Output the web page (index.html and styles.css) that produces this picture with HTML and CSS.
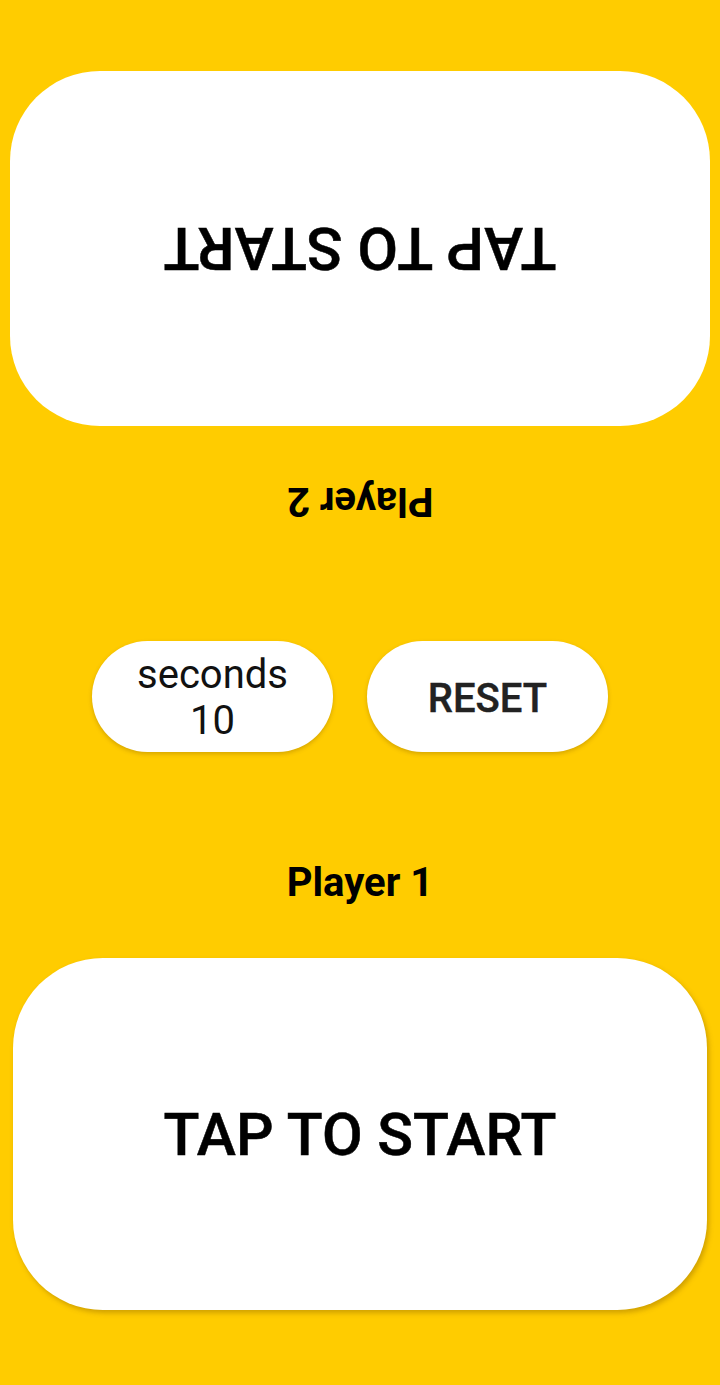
FILE: index.html
```html
<!DOCTYPE html>
<html lang="en">
<head>
  <meta charset="UTF-8">
  <meta name="viewport" content="width=device-width, initial-scale=1">
  <title>Chess Clock</title>
  <link rel="stylesheet" href="styles.css">
</head>
<body>
  <div class="board">
    <div class="pad pad-top flipped">TAP TO START</div>

    <div class="player player-two flipped">Player 2</div>

    <div class="controls">
      <button class="pill seconds">seconds<br>10</button>
      <button class="pill reset">RESET</button>
    </div>

    <div class="player player-one">Player 1</div>

    <div class="pad pad-bottom">TAP TO START</div>
  </div>
</body>
</html>
```

FILE: styles.css
```css
html, body {
  margin: 0;
  padding: 0;
}

body {
  font-family: Roboto, "Noto Sans", Arial, sans-serif;
  background: #ffcc00;
  color: #000;
}

.board {
  height: 1385px;
  display: flex;
  flex-direction: column;
  align-items: center;
}

.flipped {
  transform: rotate(180deg);
}

/* big tap areas, medium weight faked with a thin stroke */
.pad {
  display: flex;
  align-items: center;
  justify-content: center;
  background: white;
  border-radius: 90px;
  font-size: 59px;
  font-weight: 500;
  -webkit-text-stroke: 0.5px #000;
}

.pad-top {
  margin-top: 71px;
  width: 700px;
  height: 355px;
}

.pad-bottom {
  margin-top: 57px;
  width: 694px;
  height: 352px;
  box-shadow: 2px 3px 5px rgba(120, 80, 0, 0.35);
}

.player {
  font-size: 40px;
  font-weight: bold;
  line-height: 36px;
  height: 36px;
}

.player-two {
  margin-top: 57px;
}

.player-one {
  margin-top: 113px;
}

.controls {
  margin-top: 122px;
  margin-right: 20px;
  display: flex;
  gap: 34px;
}

.pill {
  width: 241px;
  height: 111px;
  border: none;
  border-radius: 56px;
  background: white;
  color: #222;
  font-family: inherit;
  font-size: 40px;
  box-shadow: 0 2px 4px rgba(120, 80, 0, 0.3);
  padding: 0;
}

.seconds {
  font-weight: 400;
  line-height: 46px;
  color: #111;
  padding-top: 2px;
}

.reset {
  font-weight: 500;
  -webkit-text-stroke: 0.4px #222;
  padding-top: 4px;
}
```
